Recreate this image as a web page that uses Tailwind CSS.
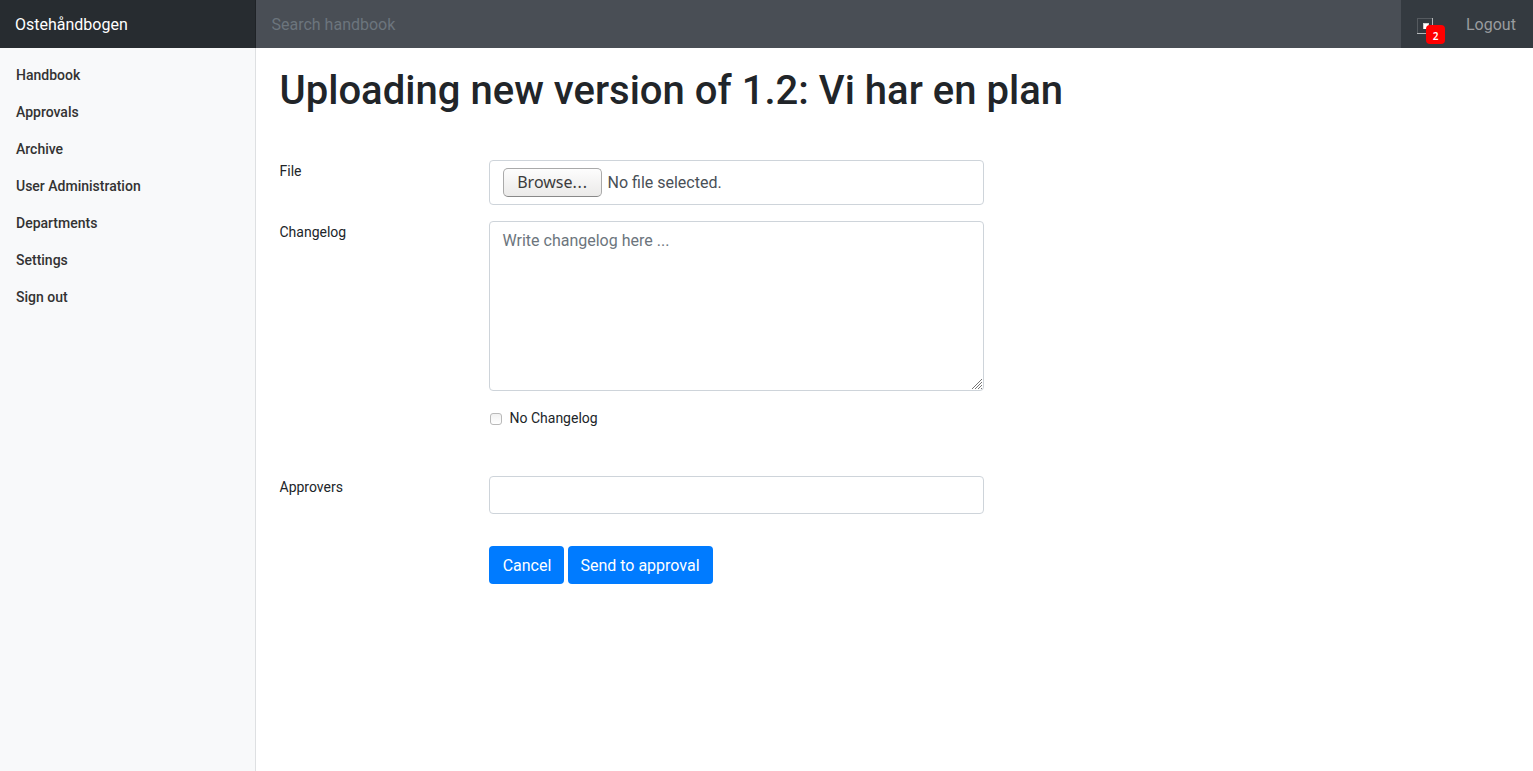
<!DOCTYPE html>
<html lang="en">
<head>
<meta charset="utf-8">
<title>Ostehåndbogen</title>
<script src="https://cdn.jsdelivr.net/npm/@tailwindcss/browser@4"></script>
</head>
<body class="flex h-screen flex-col overflow-hidden bg-white font-['Roboto',sans-serif] text-sm text-[#212529]">
<header class="flex h-12 shrink-0 bg-[#343a40] text-base leading-6">
  <a class="w-64 border-r border-[#1f2327] bg-[#272c30] pt-[13px] pl-[15px] text-white">Ostehåndbogen</a>
  <input class="min-w-0 flex-1 bg-[#494e55] pl-[15.5px] pr-4 pt-[13px] pb-[11px] placeholder:text-[#6c757d]" placeholder="Search handbook">
  <div class="relative w-[49px]">
    <svg class="absolute left-4 top-[18px]" width="16" height="16" shape-rendering="crispEdges"><path d="M0 0h15v1H1v14H0z" fill="#555a5f"/><path d="M15 0h1v16H0v-1h15z" fill="#b4b7b9"/><path d="M6 5h6v6H6z" fill="#d0d0d0"/><path d="M7 6h4v5H7z" fill="#fff"/></svg>
    <span class="absolute left-[25px] top-[25px] h-[19px] w-[19px] rounded bg-[#f00] text-center font-['Noto_Sans',sans-serif] text-[10px] font-semibold leading-[23px] text-white">2</span>
  </div>
  <a class="w-[83px] pt-[13px] pl-4 text-[#999c9f]">Logout</a>
</header>
<div class="flex flex-1">
  <nav class="w-64 border-r border-[#dee0e2] bg-[#f8f9fa] pl-4 pt-[9px] font-medium leading-[21px] text-[#333]">
    <a class="block py-2">Handbook</a>
    <a class="block py-2">Approvals</a>
    <a class="block py-2">Archive</a>
    <a class="block py-2">User Administration</a>
    <a class="block py-2">Departments</a>
    <a class="block py-2">Settings</a>
    <a class="block py-2">Sign out</a>
  </nav>
  <main class="flex-1 pl-[23.5px] pt-[19px]">
    <h1 class="text-[40px] font-medium leading-[48px] tracking-[0.02px]">Uploading new version of 1.2: Vi har en plan</h1>
    <form class="mt-[45px] grid w-[704.5px] grid-cols-[209.5px_495px] leading-[21px]">
      <label class="pt-px">File</label>
      <div class="mb-4 flex h-[45px] items-center gap-[5.5px] rounded border border-[#ced4da] pl-[13px] text-base text-[#495057]">
        <button type="button" class="h-[29px] w-[99px] rounded-[5px] border border-[#aaa] border-b-[#888] bg-linear-to-b from-[#fdfdfd] to-[#ebeae9] pb-px font-['Noto_Sans',sans-serif] leading-[24px] text-[#3c3c3c]">Browse<span class="tracking-[0.8px]">...</span></button>
        <span>No file selected.</span>
      </div>
      <label class="pt-px">Changelog</label>
      <div class="relative h-[170px]">
        <textarea class="block h-full w-full resize-none rounded border border-[#ced4da] px-[12.5px] py-[7px] text-base leading-6 placeholder:text-[#6c757d]" placeholder="Write changelog here ..."></textarea>
        <svg class="absolute bottom-[2px] right-[2px]" width="10" height="10" fill="none" stroke="#777"><path d="M0 10L10 0M3 10L10 3M6 10L10 6M9 10L10 9"/></svg>
      </div>
      <label class="col-start-2 mb-12 mt-[17px] flex h-5 items-center gap-[7px] pl-[0.5px]"><input type="checkbox" class="mt-[2px] h-3 w-3 appearance-none rounded-[3px] border border-[#b9b9b9] bg-linear-to-b from-[#f1f1f1] to-white"><span class="pl-px">No Changelog</span></label>
      <label class="pt-px">Approvers</label>
      <input class="h-[38px] rounded border border-[#ced4da] px-3 text-base">
      <div class="col-start-2 mt-8 flex gap-1 text-base leading-6 text-white">
        <button type="button" class="h-[38px] w-[75px] rounded bg-[#007bff] pl-px pt-[2px]">Cancel</button>
        <button type="button" class="h-[38px] w-[145px] rounded bg-[#007bff] pr-px pt-[2px]">Send to approval</button>
      </div>
    </form>
  </main>
</div>
</body>
</html>
